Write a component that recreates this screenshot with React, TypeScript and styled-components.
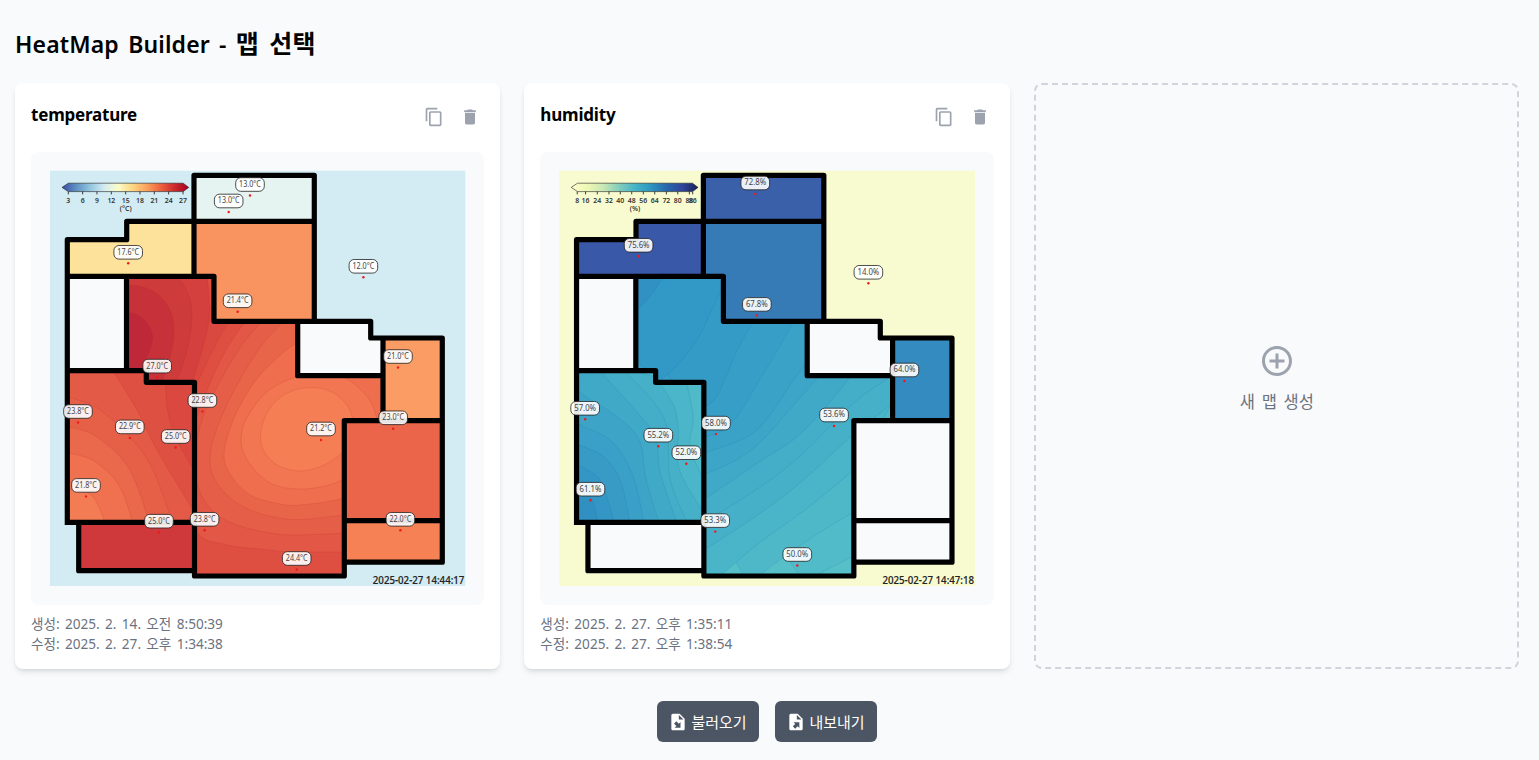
import React from "react";
import styled, { createGlobalStyle } from "styled-components";
import { MdAddCircleOutline, MdContentCopy, MdDelete } from "react-icons/md";

type Point = [number, number];
interface Band { fill: string; line: Point[]; close?: Point[] }
interface Zone { id: string; shape: string; fill: string; bands: Band[] }
interface Sensor { x: number; y: number; value: string }
interface HeatMap {
  name: string;
  viewBox: string;
  background: string;
  stroke: string;
  ramp: string[];
  ticks: [number, string][];
  unit: string;
  zones: Zone[];
  sensors: Sensor[];
  time: string;
  created: string;
  updated: string;
}

const WALLS =
  "M194 276.3V175.3H314.3V321.3M67.3 522.3V239.7H126.7V221.3H314.3M67.3 276.3H214V321.3H370.7V338H442.3V562.2H344.3M126.5 276.3V370.7M67.3 370.7H146.3V382.3H194.5V576H344.3V420.7H442.3M67.3 522.3H194.5M78.7 522.3V570.7H194.5M297.7 321.3V375.7H383M383 338V420.7M344.3 520.7H442.3";
const OUTSIDE =
  "M50 170.7H465.3V586H50ZM67.3 239.7V522.3H78.7V570.7H194.5V576H344.3V562.2H442.3V338H370.7V321.3H314.3V175.3H194V221.3H126.7V239.7Z";
const HALL =
  "M126.5 276.3H214V321.3H297.7V375.7H383V420.7H344.3V576H194.5V382.3H146.3V370.7H126.5Z";
const WEST = "M67.3 370.7H146.3V382.3H194.5V522.3H67.3Z";
const STORE = "M194 175.3H314.3V221.3H194Z";
const NORTH = "M194 221.3H314.3V321.3H214V276.3H194Z";
const ENTRY = "M126.7 221.3H194V276.3H67.3V239.7H126.7Z";
const EAST = "M383 338H442.3V420.7H383Z";
const SOUTHEAST = "M344.3 420.7H442.3V520.7H344.3Z";
const PORCH = "M344.3 520.7H442.3V562.2H344.3Z";
const BALCONY = "M78.7 522.3H194.5V570.7H78.7Z";

const FILE_IMPORT =
  "M14 2H6C4.89 2 4 2.9 4 4V20C4 21.11 4.89 22 6 22H18C19.11 22 20 21.11 20 20V8L14 2M13 3.5L18.5 9H13V3.5M10.05 11.22L12.88 14.05L15 11.93V19H7.93L10.05 16.88L7.22 14.05";
const FILE_EXPORT =
  "M14 2H6C4.89 2 4 2.9 4 4V20C4 21.11 4.89 22 6 22H18C19.11 22 20 21.11 20 20V8L14 2M13 3.5L18.5 9H13V3.5M8.93 12.22H16V19.29L13.88 17.17L11.05 20L8.22 17.17L11.05 14.35";

const top: Point[] = [[50, 250], [460, 250]];
const cornerNW: Point[] = [[50, 250]];
const cornerSW: Point[] = [[50, 600]];

const MAPS: HeatMap[] = [
  {
    name: "temperature",
    viewBox: "31 152 453.33 453.33",
    background: "#d3ebf2",
    stroke: "#b92a2a",
    ramp: ["#3b4ba3", "#5d91c3", "#93c6df", "#d3ebf2", "#fbfcc8", "#fdd683", "#fba35d", "#ed613f", "#cc2a2c", "#a50026"],
    ticks: [3, 6, 9, 12, 15, 18, 21, 24, 27].map((v, i) => [68.3 + i * 14.34, String(v)] as [number, string]),
    unit: "(°C)",
    zones: [
      { id: "store", shape: STORE, fill: "#e5f4f1", bands: [] },
      { id: "north", shape: NORTH, fill: "#f99460", bands: [] },
      { id: "entry", shape: ENTRY, fill: "#fde29b", bands: [] },
      { id: "east", shape: EAST, fill: "#fa9c64", bands: [] },
      { id: "southeast", shape: SOUTHEAST, fill: "#eb654a", bands: [] },
      { id: "porch", shape: PORCH, fill: "#f58155", bands: [] },
      { id: "balcony", shape: BALCONY, fill: "#cf393b", bands: [] },
      {
        id: "hall", shape: HALL, fill: "#de4f41",
        bands: [
          { fill: "#e25745", line: [[250, 315], [226, 350], [205, 395], [190, 440], [184, 490], [197, 533], [227, 545], [260, 549], [290, 551.7], [350, 552]], close: [[420, 552], [420, 300]] },
          { fill: "#e55e48", line: [[268, 315], [242, 345], [217, 387], [202, 420], [195, 455], [199, 490], [215, 513], [237, 525], [265, 532], [293, 535], [350, 533]], close: [[420, 533], [420, 300]] },
          { fill: "#e9654a", line: [[290, 315], [262, 345], [236, 387], [217, 428], [210, 460], [217, 483], [237, 503], [265, 515], [300, 519.5], [350, 514]], close: [[420, 514], [420, 300]] },
          { fill: "#ee6e4e", line: [[312, 333], [284, 352], [256, 380], [234, 418], [224, 455], [232, 477], [250, 495], [275, 503], [300, 505], [350, 496], [390, 470]], close: [[420, 300]] },
          { fill: "#f27652", line: [[390, 455], [342, 480], [320, 487], [297, 489], [272, 484], [253, 468], [242, 448], [243, 427], [253, 408], [268, 391], [288, 380], [315, 373], [343, 377], [362, 391], [373, 406], [378, 425]] },
          { fill: "#f57e55", line: [[358, 435], [342, 453], [322, 466], [300, 471], [279, 466], [265, 453], [260.5, 437], [265, 417], [276, 401], [292, 391], [312, 387.5], [332, 392], [347, 405], [354, 422]] },
          { fill: "#da493f", line: [[234, 315], [222, 333], [209, 358], [197, 384], [188, 405]], close: [[50, 400], [50, 250]] },
          { fill: "#d3403d", line: [[206, 270], [209, 293], [209, 320], [203, 347], [192, 384]], close: [[50, 400], [50, 250]] },
          { fill: "#ce3b3b", line: [[170, 270], [186, 289], [192, 313], [188, 347], [176, 384]], close: [[50, 400], [50, 250]] },
          { fill: "#c6313a", line: [[120, 286], [138, 286], [156, 293], [170, 310], [174, 332], [170, 357], [161, 386]], close: [[50, 400], [50, 285]] },
          { fill: "#be2839", line: [[120, 313], [135, 314], [147, 323], [152.7, 338], [147, 357], [136, 380]], close: [[50, 400], [50, 313]] },
        ],
      },
      {
        id: "west", shape: WEST, fill: "#da483f",
        bands: [
          { fill: "#de5042", line: [[166, 377], [166, 395], [168, 413], [177, 440], [198, 477]], close: [[198, 600], [50, 600], [50, 350]] },
          { fill: "#e35a46", line: [[111, 368], [137, 410], [157, 450], [198, 518]], close: [[198, 600], [50, 600], [50, 350]] },
          { fill: "#e66048", line: [[63, 397], [78, 400], [100, 410], [130, 437], [153, 470], [175, 530]], close: cornerSW },
          { fill: "#ea684c", line: [[63, 427], [78, 429], [97, 437], [123, 460], [138, 488], [151, 530]], close: cornerSW },
          { fill: "#ef7150", line: [[63, 453], [78, 455], [97, 463], [120, 487], [135, 530]], close: cornerSW },
          { fill: "#f47c54", line: [[63, 490], [78, 491], [94, 498], [108, 530]], close: cornerSW },
        ],
      },
    ],
    sensors: [
      { x: 250, y: 184.5, value: "13.0°C" }, { x: 228.7, y: 201, value: "13.0°C" },
      { x: 128.2, y: 252.3, value: "17.6°C" }, { x: 237.6, y: 300.8, value: "21.4°C" },
      { x: 157.2, y: 366.1, value: "27.0°C" }, { x: 363.4, y: 266.3, value: "12.0°C" },
      { x: 398, y: 356.5, value: "21.0°C" }, { x: 78, y: 411.5, value: "23.8°C" },
      { x: 129.8, y: 426.9, value: "22.9°C" }, { x: 175.7, y: 436.5, value: "25.0°C" },
      { x: 202.4, y: 400.5, value: "22.8°C" }, { x: 86, y: 485.4, value: "21.8°C" },
      { x: 159, y: 521.2, value: "25.0°C" }, { x: 204.6, y: 519.3, value: "23.8°C" },
      { x: 321, y: 429, value: "21.2°C" }, { x: 393.2, y: 417.8, value: "23.0°C" },
      { x: 400.4, y: 519.3, value: "22.0°C" }, { x: 296.7, y: 558.5, value: "24.4°C" },
    ],
    time: "2025-02-27 14:44:17",
    created: "2025. 2. 14. 오전 8:50:39",
    updated: "2025. 2. 27. 오후 1:34:38",
  },
  {
    name: "humidity",
    viewBox: "30.8 152 452.8 453.33",
    background: "#f8fbcf",
    stroke: "#1d6f9f",
    ramp: ["#fffed1", "#eef8b4", "#c9e8b5", "#83cebb", "#46b5c6", "#2d96c1", "#2768ad", "#30459b", "#172257"],
    ticks: [
      [68, "8"], [76.3, "16"], [88, "24"], [99.7, "32"], [111, "40"], [122.4, "48"], [134, "56"],
      [145.4, "64"], [157, "72"], [168.4, "80"], [180, "88"], [183.3, "86"],
    ],
    unit: "(%)",
    zones: [
      { id: "store", shape: STORE, fill: "#3a60aa", bands: [] },
      { id: "north", shape: NORTH, fill: "#367ab6", bands: [] },
      { id: "entry", shape: ENTRY, fill: "#3958a8", bands: [] },
      { id: "east", shape: EAST, fill: "#348bc0", bands: [] },
      {
        id: "hall", shape: HALL, fill: "#57bfc8",
        bands: [
          { fill: "#51bbc9", line: [[350, 552], [342, 557], [311, 573], [296, 583]], close: top },
          { fill: "#4eb8c9", line: [[350, 507], [342, 513], [300, 539], [257, 570], [240, 586]], close: top },
          { fill: "#4ab4c9", line: [[350, 466], [341, 473], [294, 511], [251, 542], [214, 573], [195, 588]], close: top },
          { fill: "#47b0c9", line: [[390, 398], [342, 436], [294, 480], [251, 513], [198, 548], [180, 560]], close: top },
          { fill: "#44adc8", line: [[390, 372], [370, 384], [342, 405], [294, 453], [251, 487], [198, 520], [180, 530]], close: top },
          { fill: "#40a9c8", line: [[346, 370], [318, 405], [286, 438], [251, 461], [198, 497], [180, 506]], close: top },
          { fill: "#3da5c8", line: [[315, 370], [285, 404], [251, 442], [225, 461], [198, 473], [180, 480]], close: top },
          { fill: "#3aa2c7", line: [[310, 348], [284, 380], [264, 410], [241, 435], [198, 452], [180, 456]], close: top },
          { fill: "#379fc7", line: [[286, 318], [267, 352], [250, 380], [230, 413], [212, 431], [190, 438]], close: top },
          { fill: "#349bc6", line: [[246, 317], [228, 350], [216, 378], [207, 397], [190, 412]], close: top },
          { fill: "#3298c6", line: [[216, 280], [200, 315], [187, 341], [165, 368], [145, 385]], close: top },
          { fill: "#3191c3", line: [[120, 318], [130, 308], [144, 292], [156, 272]], close: cornerNW },
        ],
      },
      {
        id: "west", shape: WEST, fill: "#50bac9",
        bands: [
          { fill: "#4bb5c9", line: [[176, 377], [181, 400], [184, 420], [181, 448], [198, 488]], close: [[198, 600], [50, 600], [50, 350]] },
          { fill: "#47b0c9", line: [[146, 377], [164, 405], [169, 430], [170, 470], [198, 518]], close: [[198, 600], [50, 600], [50, 350]] },
          { fill: "#44adc8", line: [[112, 368], [145, 403], [158, 430], [161, 480], [181, 530]], close: [[50, 600], [50, 350]] },
          { fill: "#40a9c8", line: [[88, 368], [124, 408], [146, 437], [151, 473], [170, 530]], close: [[50, 600], [50, 350]] },
          { fill: "#3da4c8", line: [[62, 386], [80, 399], [107, 416], [130, 440], [137, 480], [152, 530]], close: cornerSW },
          { fill: "#3aa0c7", line: [[62, 421], [80, 429], [104, 443], [124, 477], [136, 530]], close: cornerSW },
          { fill: "#379bc6", line: [[62, 442], [80, 449], [97, 459], [112, 483], [122, 530]], close: cornerSW },
          { fill: "#3496c4", line: [[62, 463], [80, 471], [93, 484], [107, 530]], close: cornerSW },
          { fill: "#3190c2", line: [[62, 481], [72, 486], [84, 503], [90, 530]], close: cornerSW },
        ],
      },
    ],
    sensors: [
      { x: 245.8, y: 183, value: "72.8%" }, { x: 129.3, y: 245.3, value: "75.6%" },
      { x: 247.4, y: 304.4, value: "67.8%" }, { x: 358.8, y: 272.3, value: "14.0%" },
      { x: 394.8, y: 370, value: "64.0%" }, { x: 75.9, y: 408.3, value: "57.0%" },
      { x: 149, y: 435.2, value: "55.2%" }, { x: 177, y: 452.7, value: "52.0%" },
      { x: 206.6, y: 423.1, value: "58.0%" }, { x: 81.2, y: 489.2, value: "61.1%" },
      { x: 205.8, y: 520.6, value: "53.3%" }, { x: 324.5, y: 415, value: "53.6%" },
      { x: 287.8, y: 554.5, value: "50.0%" },
    ],
    time: "2025-02-27 14:47:18",
    created: "2025. 2. 27. 오후 1:35:11",
    updated: "2025. 2. 27. 오후 1:38:54",
  },
];

// Catmull-Rom spline through the contour points, closed outside the zone.
const bandPath = ({ line, close = [] }: Band) => {
  let d = `M${line[0][0]} ${line[0][1]}`;
  for (let i = 0; i < line.length - 1; i++) {
    const a = line[i - 1] ?? line[i];
    const b = line[i];
    const c = line[i + 1];
    const e = line[i + 2] ?? c;
    d += `C${b[0] + (c[0] - a[0]) / 6} ${b[1] + (c[1] - a[1]) / 6} ${c[0] - (e[0] - b[0]) / 6} ${c[1] - (e[1] - b[1]) / 6} ${c[0]} ${c[1]}`;
  }
  close.forEach(([x, y]) => { d += `L${x} ${y}`; });
  return d + "Z";
};

const GlobalStyle = createGlobalStyle`
  *, *::before, *::after { box-sizing: border-box; }
  body {
    margin: 0;
    background: #f9fafb;
    color: #000;
    font-family: "Noto Sans", "Noto Sans CJK KR", sans-serif;
  }
  button { font: inherit; border: 0; cursor: pointer; }
`;

const Page = styled.main`
  width: 1534px;
  min-height: 760px;
  padding: 27px 15px 18px;
`;

const Title = styled.h1`
  margin: 0 0 24px;
  height: 32px;
  font-size: 23px;
  line-height: 34px;
  font-weight: 600;
  letter-spacing: 0.15px;
  word-spacing: 3.1px;
  white-space: nowrap;
`;

const Hangul = styled.span`
  font-size: 25px;
  font-weight: 700;
  line-height: 1;
  word-spacing: 3.6px;
`;

const Grid = styled.div`
  display: grid;
  grid-template-columns: repeat(3, 1fr);
  grid-template-rows: 586px;
  gap: 24px;
`;

const Card = styled.article`
  padding: 16px 16px 14px;
  border-radius: 8px;
  background: #fff;
  box-shadow: 0 4px 6px -1px rgba(0, 0, 0, 0.1), 0 2px 4px -2px rgba(0, 0, 0, 0.1);
`;

const CardHeader = styled.header`
  display: flex;
  justify-content: space-between;
  height: 53px;
`;

const CardTitle = styled.h2`
  margin: 0;
  font-size: 17px;
  line-height: 31px;
  font-weight: 700;
  letter-spacing: -0.2px;
`;

const Actions = styled.div`
  display: flex;
  gap: 8px;
  padding-top: 4.3px;
`;

const IconButton = styled.button`
  display: flex;
  width: 28px;
  height: 28px;
  padding: 4px;
  background: none;
  color: #9ca3af;
  font-size: 20px;
`;

const Preview = styled.div`
  aspect-ratio: 1;
  overflow: hidden;
  border-radius: 8px;
  background: #f9fafb;
  svg { display: block; width: 100%; height: 100%; }
`;

const Dates = styled.div`
  margin-top: 9px;
  color: #6b7280;
  font-size: 13.6px;
  line-height: 20px;
  word-spacing: 1.8px;
  white-space: nowrap;
  p { margin: 0; }
`;

const NewMap = styled.button`
  display: flex;
  flex-direction: column;
  align-items: center;
  justify-content: center;
  gap: 11px;
  padding: 4px 0 0 1px;
  border: 2px dashed #d1d5db;
  border-radius: 8px;
  background: none;
  color: #6b7280;
  font-size: 16.5px;
  line-height: 24px;
  word-spacing: 2.5px;
  svg { color: #9ca3af; font-size: 36px; }
`;

const Footer = styled.footer`
  display: flex;
  justify-content: center;
  gap: 16px;
  margin-top: 32px;
`;

const FileButton = styled.button`
  display: flex;
  align-items: center;
  justify-content: center;
  gap: 3px;
  width: 102px;
  height: 41px;
  padding: 0 1px 0 0;
  border-radius: 6px;
  background: #4b5563;
  color: #fff;
  font-size: 15px;
  line-height: 24px;
`;

function FileIcon({ d }: { d: string }) {
  return (
    <svg width="20" height="20" viewBox="0 0 24 24" fill="currentColor" fillRule="evenodd">
      <path d={d} />
    </svg>
  );
}

function FloorPlan({ map }: { map: HeatMap }) {
  const id = map.name;
  return (
    <svg viewBox={map.viewBox} preserveAspectRatio="none" fontFamily="Noto Sans, sans-serif" textAnchor="middle">
      <defs>
        <linearGradient id={`${id}-ramp`}>
          {map.ramp.map((c, i) => <stop key={i} offset={i / (map.ramp.length - 1)} stopColor={c} />)}
        </linearGradient>
        {map.zones.map((z) => (
          <clipPath key={z.id} id={`${id}-${z.id}`}><path d={z.shape} /></clipPath>
        ))}
      </defs>
      <path d={OUTSIDE} fill={map.background} fillRule="evenodd" />
      {map.zones.map((z) => (
        <g key={z.id} clipPath={`url(#${id}-${z.id})`}>
          <path d={z.shape} fill={z.fill} />
          {z.bands.map((b, i) => (
            <path key={i} d={bandPath(b)} fill={b.fill} stroke={map.stroke} strokeOpacity={0.22} strokeWidth={0.7} />
          ))}
        </g>
      ))}
      <path d={WALLS} fill="none" stroke="#000" strokeWidth={5.2} strokeLinejoin="round" strokeLinecap="square" />
      <path d="M62 187.4L68.3 183.2H183.2L188.7 187.4L183.2 191.6H68.3Z" fill={`url(#${id}-ramp)`} stroke="#222" strokeWidth={0.6} />
      {map.ticks.map(([x, label]) => (
        <g key={label}>
          <path d={`M${x} 191.6V194.4`} stroke="#111" strokeWidth={0.8} />
          <text x={x} y={202.6} fontSize={6.9} fontWeight={600} fill="#333">{label}</text>
        </g>
      ))}
      <text x={125.7} y={211.4} fontSize={7} fontWeight={500} fill="#222">{map.unit}</text>
      {map.sensors.map((s, i) => (
        <g key={i}>
          <circle cx={s.x} cy={s.y + 11} r={1.2} fill="#f01818" />
          <rect x={s.x - 14.3} y={s.y - 6.8} width={28.6} height={13.6} rx={5} fill="#fff" fillOpacity={0.9} stroke="#222" strokeWidth={0.8} />
          <text x={s.x} y={s.y + 2.5} fontSize={8.4} fill="#444" textLength={21.8} lengthAdjust="spacingAndGlyphs">{s.value}</text>
        </g>
      ))}
      <text x={418.6} y={583.8} fontSize={10} fontWeight={500} fill="#222" stroke="#222" strokeWidth={0.15} textLength={91.6} lengthAdjust="spacingAndGlyphs">{map.time}</text>
    </svg>
  );
}

export default function App() {
  return (
    <>
      <GlobalStyle />
      <Page>
        <Title>HeatMap Builder - <Hangul>맵 선택</Hangul></Title>
        <Grid>
          {MAPS.map((map) => (
            <Card key={map.name}>
              <CardHeader>
                <CardTitle>{map.name}</CardTitle>
                <Actions>
                  <IconButton aria-label="복사"><MdContentCopy /></IconButton>
                  <IconButton aria-label="삭제"><MdDelete /></IconButton>
                </Actions>
              </CardHeader>
              <Preview><FloorPlan map={map} /></Preview>
              <Dates>
                <p>생성: {map.created}</p>
                <p>수정: {map.updated}</p>
              </Dates>
            </Card>
          ))}
          <NewMap>
            <MdAddCircleOutline />
            <span>새 맵 생성</span>
          </NewMap>
        </Grid>
        <Footer>
          <FileButton><FileIcon d={FILE_IMPORT} /><span>불러오기</span></FileButton>
          <FileButton><FileIcon d={FILE_EXPORT} /><span>내보내기</span></FileButton>
        </Footer>
      </Page>
    </>
  );
}
